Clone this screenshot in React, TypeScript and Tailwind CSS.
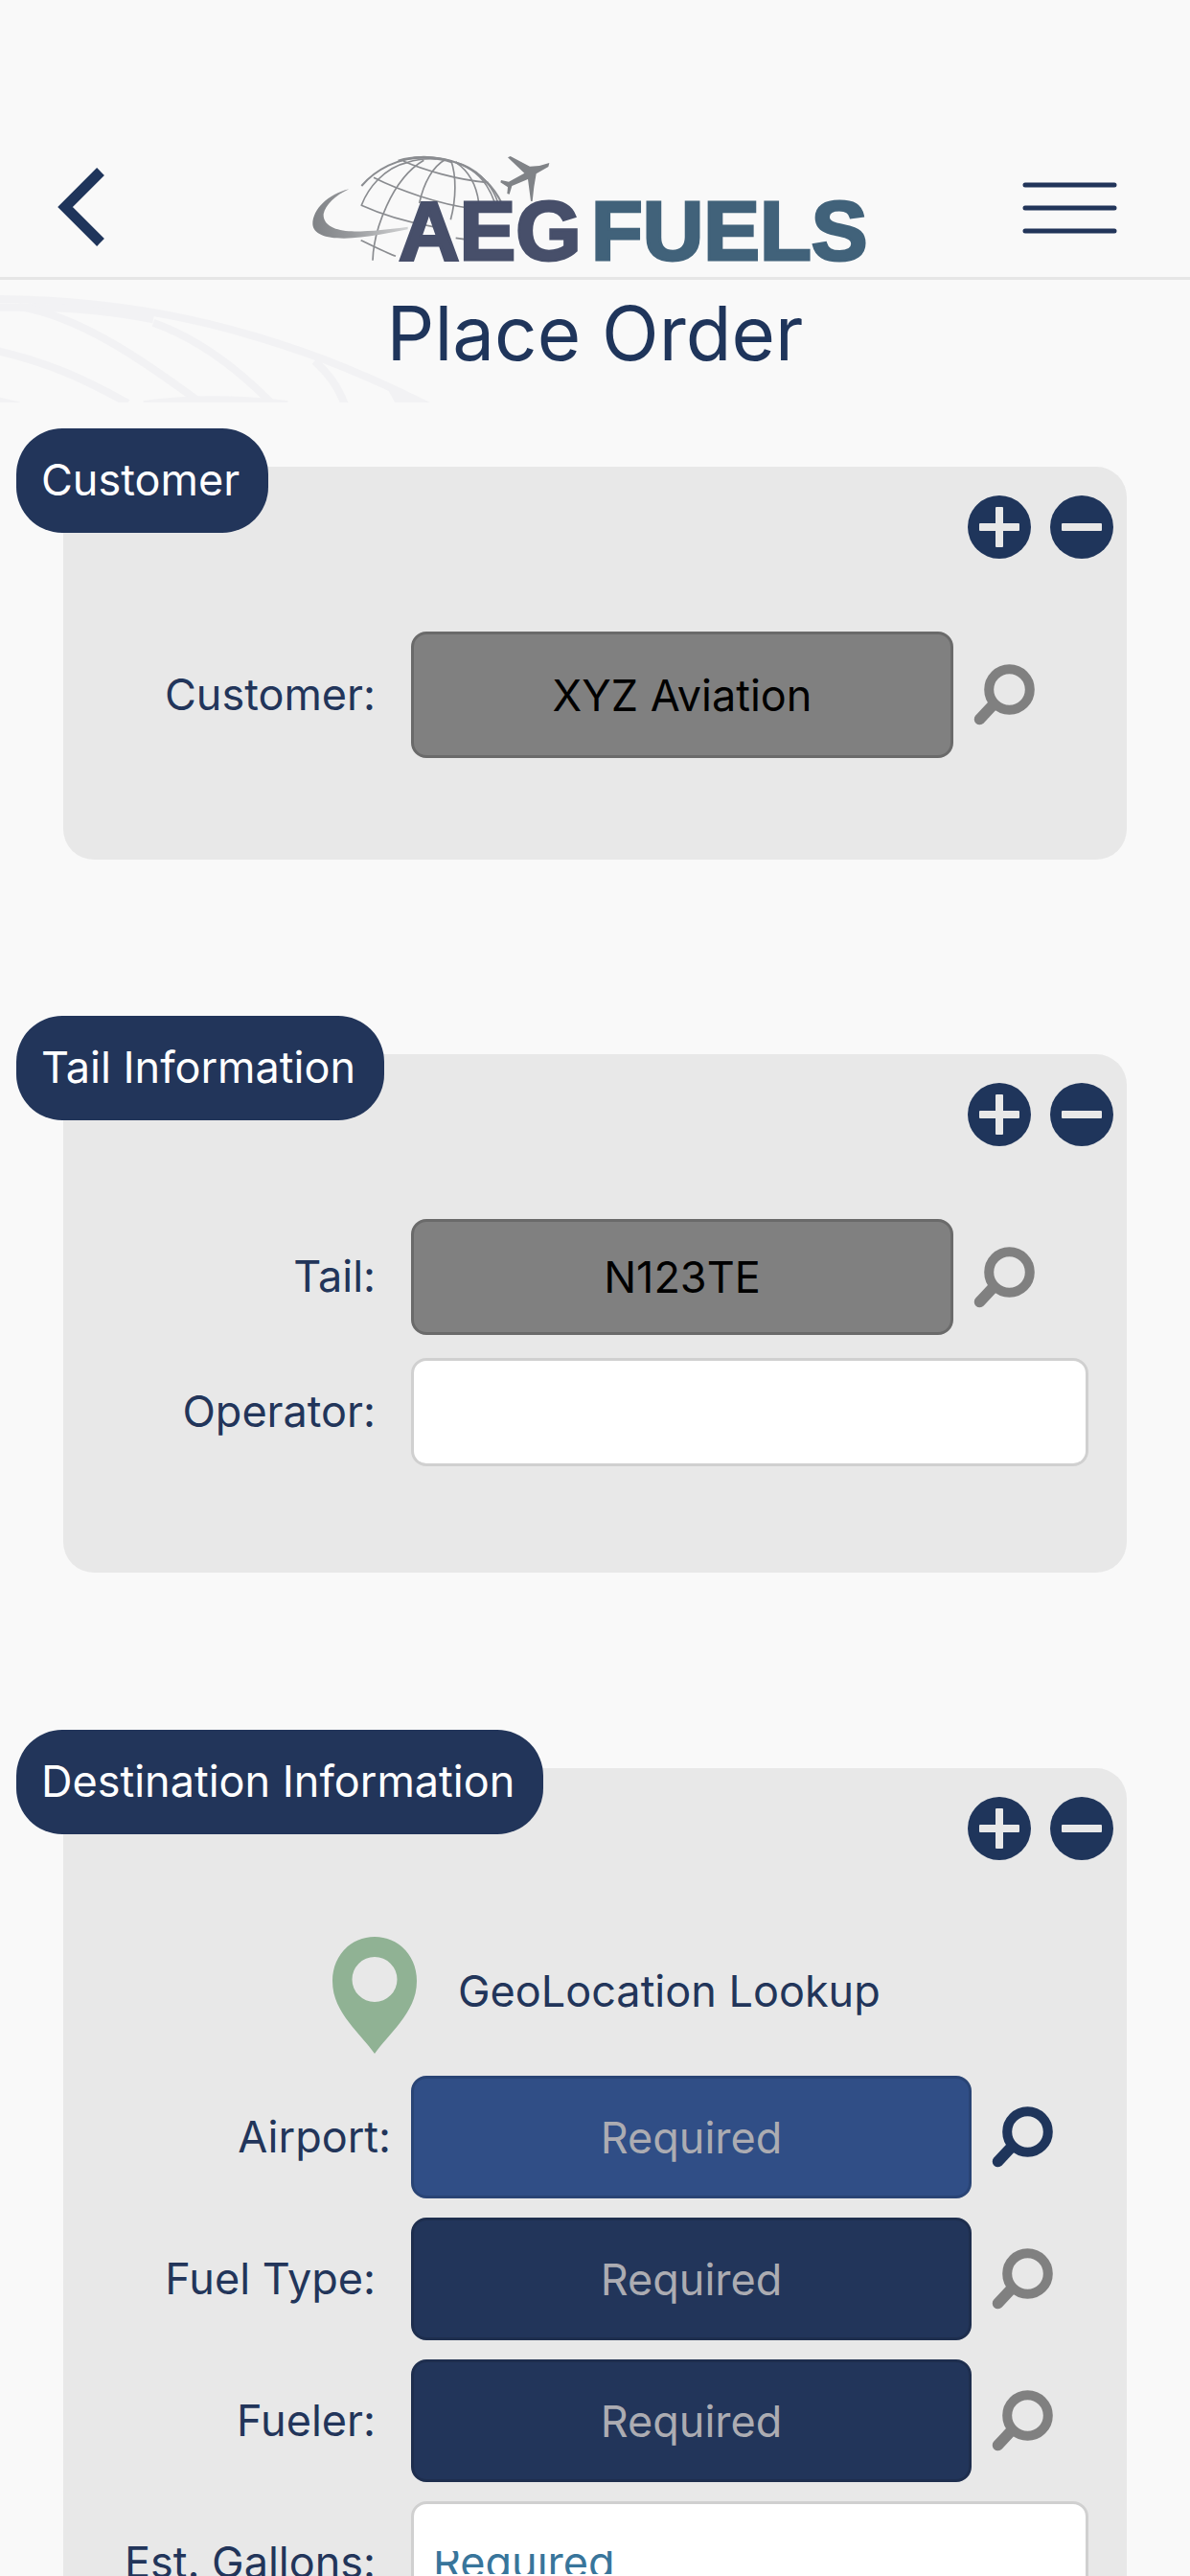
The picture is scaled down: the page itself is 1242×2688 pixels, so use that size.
import React from "react";

const NAVY = "#22355a";

function Logo() {
  return (
    <svg viewBox="327 160 590 116" className="h-[116px] w-[590px] overflow-visible" role="img" aria-label="AEG Fuels">
      <defs>
        <linearGradient id="swoosh" x1="0" x2="1" y1="0" y2="0">
          <stop offset="0" stopColor="#808387" />
          <stop offset="0.4" stopColor="#97999c" />
          <stop offset="1" stopColor="#d2d3d4" />
        </linearGradient>
      </defs>
      <g transform="translate(310 140) scale(0.33333)">
        <g fill="none" stroke="#8a8c90" strokeWidth="5">
          <path d="M205 162C250 110 320 74 400 71C520 74 600 130 643 214" strokeWidth="6" />
          <path d="M320 84C370 68 440 70 490 88" strokeWidth="8" />
          <path d="M205 222C225 170 275 105 350 88C380 78 410 76 440 78" />
          <path d="M240 395C243 300 300 140 400 82" />
          <path d="M386 216C400 150 430 100 466 80" />
          <path d="M484 268C502 200 502 130 485 82" />
          <path d="M572 214C565 160 540 115 500 88" />
          <path d="M622 214C600 150 560 108 500 88C560 104 610 150 632 214" />
          <path d="M335 84C400 112 500 142 602 152" />
          <path d="M243 136C320 175 450 220 548 232" />
          <path d="M203 222C260 248 330 272 430 290" />
          <path d="M203 332C240 350 280 370 312 382" />
          <path d="M500 325L548 332" />
        </g>
        <path
          d="M166 172C100 188 52 235 52 282C54 312 90 326 150 326C220 324 290 310 350 298L350 290C290 298 220 306 165 304C115 300 84 282 86 250C92 222 122 192 166 172Z"
          fill="url(#swoosh)"
        />
        <path
          d="M793 90L790 102L752 124L745 165L740 210L735 210L726 141L676 162L668 188L661 186L663 166L640 151L642 144L666 149L715 122L663 73L671 69L732 101L762 99Z"
          fill="#808387"
        />
      </g>
      <g fontFamily="'Liberation Sans', sans-serif" fontWeight="700" fontSize="88" strokeWidth="3">
        <text x="417" y="271" fill="#474f6a" stroke="#474f6a">
          AEG
        </text>
        <text x="618" y="271" fill="#41627a" stroke="#41627a">
          FUELS
        </text>
      </g>
    </svg>
  );
}

function GlobeWatermark() {
  return (
    <svg viewBox="0 292 460 128" className="absolute top-0 left-0 h-32 w-[460px]" aria-hidden="true">
      <g transform="translate(0 140) scale(0.33333)" fill="none" stroke="#f2f2f4" strokeWidth="24">
        <path d="M-20 516C400 520 700 590 1000 700C1120 745 1220 790 1340 850" />
        <path d="M-20 542C150 540 300 545 480 580" />
        <path d="M60 540C250 570 450 710 620 835" />
        <path d="M-20 676C150 712 270 770 400 842" />
        <path d="M480 590C620 640 750 740 850 842" />
        <path d="M985 710C1030 750 1060 790 1080 848" />
        <path d="M450 846C600 825 750 828 900 846M-20 832L60 850" />
        <path d="M1215 800L1345 846L1240 846Z" fill="#f2f2f4" stroke="none" />
      </g>
    </svg>
  );
}

function SearchIcon() {
  return (
    <svg viewBox="0 0 64 64" className="size-16" fill="none" stroke="currentColor" aria-hidden="true">
      <circle cx="37.5" cy="26.5" r="21.3" strokeWidth="10" />
      <path d="M21 42L6.5 57.5" strokeWidth="11.5" strokeLinecap="round" />
    </svg>
  );
}

function RoundIcon({ plus }: { plus?: boolean }) {
  return (
    <svg viewBox="0 0 66 66" className="size-[66px]" aria-hidden="true">
      <circle cx="33" cy="33" r="33" fill="#1f355b" />
      <rect x="12" y="29" width="42" height="8" rx="1" fill="#e8e8e8" />
      {plus && <rect x="29" y="12" width="8" height="42" rx="1" fill="#e8e8e8" />}
    </svg>
  );
}

function Panel({ title, className, children }: { title: string; className: string; children: React.ReactNode }) {
  return (
    <section className={`relative mx-[66px] rounded-[32px] bg-[#e8e8e8] ${className}`}>
      <h2 className="absolute -top-10 -left-[49px] flex h-[109px] items-center rounded-[48px] bg-[#22355a] pr-[30px] pl-[26px] text-[45px] whitespace-nowrap text-white">
        {title}
      </h2>
      <div className="mb-[76px] flex justify-end gap-5 pt-[30px] pr-[14px]">
        <button type="button" aria-label={`Expand ${title}`}>
          <RoundIcon plus />
        </button>
        <button type="button" aria-label={`Collapse ${title}`}>
          <RoundIcon />
        </button>
      </div>
      {children}
    </section>
  );
}

interface LookupProps {
  id: string;
  label: string;
  labelClass?: string;
  value?: string;
  boxClass: string;
  rowClass: string;
  iconClass?: string;
}

function LookupRow({ id, label, labelClass = "w-[326px] mr-[37px]", value, boxClass, rowClass, iconClass = "text-[#808080]" }: LookupProps) {
  return (
    <div className={`flex items-center ${rowClass}`}>
      <label htmlFor={id} className={`shrink-0 text-right ${labelClass}`}>
        {label}
      </label>
      <input
        id={id}
        readOnly
        defaultValue={value}
        placeholder="Required"
        className={`min-w-0 flex-1 rounded-2xl border-3 text-center text-black placeholder:text-[#acacb2] ${boxClass}`}
      />
      <button type="button" aria-label={`Search ${label}`} className={`ml-[21px] shrink-0 ${iconClass}`}>
        <SearchIcon />
      </button>
    </div>
  );
}

export default function App() {
  return (
    <div className="flex h-screen flex-col overflow-hidden bg-[#f9f9f9] font-['Inter',sans-serif] text-[45px] leading-tight text-[#22355a]">
      <header className="grid shrink-0 grid-cols-[1fr_auto_1fr] items-end border-b-3 border-[#e6e6e6] px-[60px] pt-[160px] pb-[13px]">
        <button type="button" aria-label="Back" className="mb-[18px] justify-self-start">
          <svg viewBox="0 0 50 84" className="h-[84px] w-[50px]" fill="none" stroke="#1f355b" strokeWidth="11">
            <path d="M45 5L8 42L45 79" />
          </svg>
        </button>
        <Logo />
        <button type="button" aria-label="Menu" className="mr-4 mb-[31px] justify-self-end">
          <svg viewBox="0 0 99 56" className="h-14 w-[99px]" stroke={NAVY} strokeWidth="5" strokeLinecap="round">
            <path d="M3 4H96M3 28H96M3 52H96" />
          </svg>
        </button>
      </header>

      <main className="min-h-0 flex-1 overflow-y-auto [scrollbar-width:none]">
        <div className="relative pt-1 pb-[87px]">
          <GlobeWatermark />
          <h1 className="relative text-center text-[78px] leading-[104px] text-[#1f355b]">Place Order</h1>
        </div>

        <form>
          <Panel title="Customer" className="mb-[203px] pb-[106px]">
            <LookupRow id="customer" label="Customer:" value="XYZ Aviation" rowClass="pr-24" boxClass="h-[132px] border-[#6a6a6a] bg-[#808080]" />
          </Panel>

          <Panel title="Tail Information" className="mb-[204px] pb-[111px]">
            <LookupRow id="tail" label="Tail:" value="N123TE" rowClass="pr-24" boxClass="h-[121px] border-[#6a6a6a] bg-[#808080]" />
            <div className="mt-6 flex items-center pr-10">
              <label htmlFor="operator" className="mr-[37px] w-[326px] shrink-0 text-right">
                Operator:
              </label>
              <input id="operator" className="h-[113px] min-w-0 flex-1 rounded-2xl border-3 border-[#d0d0d0] bg-white px-6" />
            </div>
          </Panel>

          <Panel title="Destination Information" className="pb-[111px]">
            <button type="button" className="mt-20 ml-[281px] flex items-center gap-[43px]">
              <svg viewBox="0 0 88 122" className="h-[122px] w-[88px]" aria-hidden="true">
                <path
                  fill="#90b294"
                  fillRule="evenodd"
                  d="M44 0C69 0 88 20 88 46C88 64 80 77 71 89C62 101 51 112 44 122C37 112 26 101 17 89C8 77 0 64 0 46C0 20 19 0 44 0ZM44 21A23 23 0 1 0 44 68A23 23 0 1 0 44 21Z"
                />
              </svg>
              <span className="pb-2">GeoLocation Lookup</span>
            </button>
            <div className="mt-[23px] flex flex-col gap-5">
              <LookupRow id="airport" label="Airport:" labelClass="w-[342px] mr-[21px]" rowClass="pr-[77px]" boxClass="h-32 border-[#294475] bg-[#304e86]" iconClass="text-[#1f355b]" />
              <LookupRow id="fuel-type" label="Fuel Type:" rowClass="pr-[77px]" boxClass="h-32 border-[#1e2e4e] bg-[#22355a]" />
              <LookupRow id="fueler" label="Fueler:" rowClass="pr-[77px]" boxClass="h-32 border-[#1e2e4e] bg-[#22355a]" />
              <div className="flex items-center pr-10">
                <label htmlFor="gallons" className="mr-[37px] w-[326px] shrink-0 text-right">
                  Est. Gallons:
                </label>
                <div className="flex h-32 min-w-0 flex-1 items-center rounded-2xl border-3 border-[#d0d0d0] bg-white px-5">
                  <div className="flex h-6 w-full items-center overflow-hidden">
                    <input id="gallons" placeholder="Required" className="w-full outline-none placeholder:text-[#38759b]" />
                  </div>
                </div>
              </div>
            </div>
          </Panel>
        </form>
      </main>
    </div>
  );
}
